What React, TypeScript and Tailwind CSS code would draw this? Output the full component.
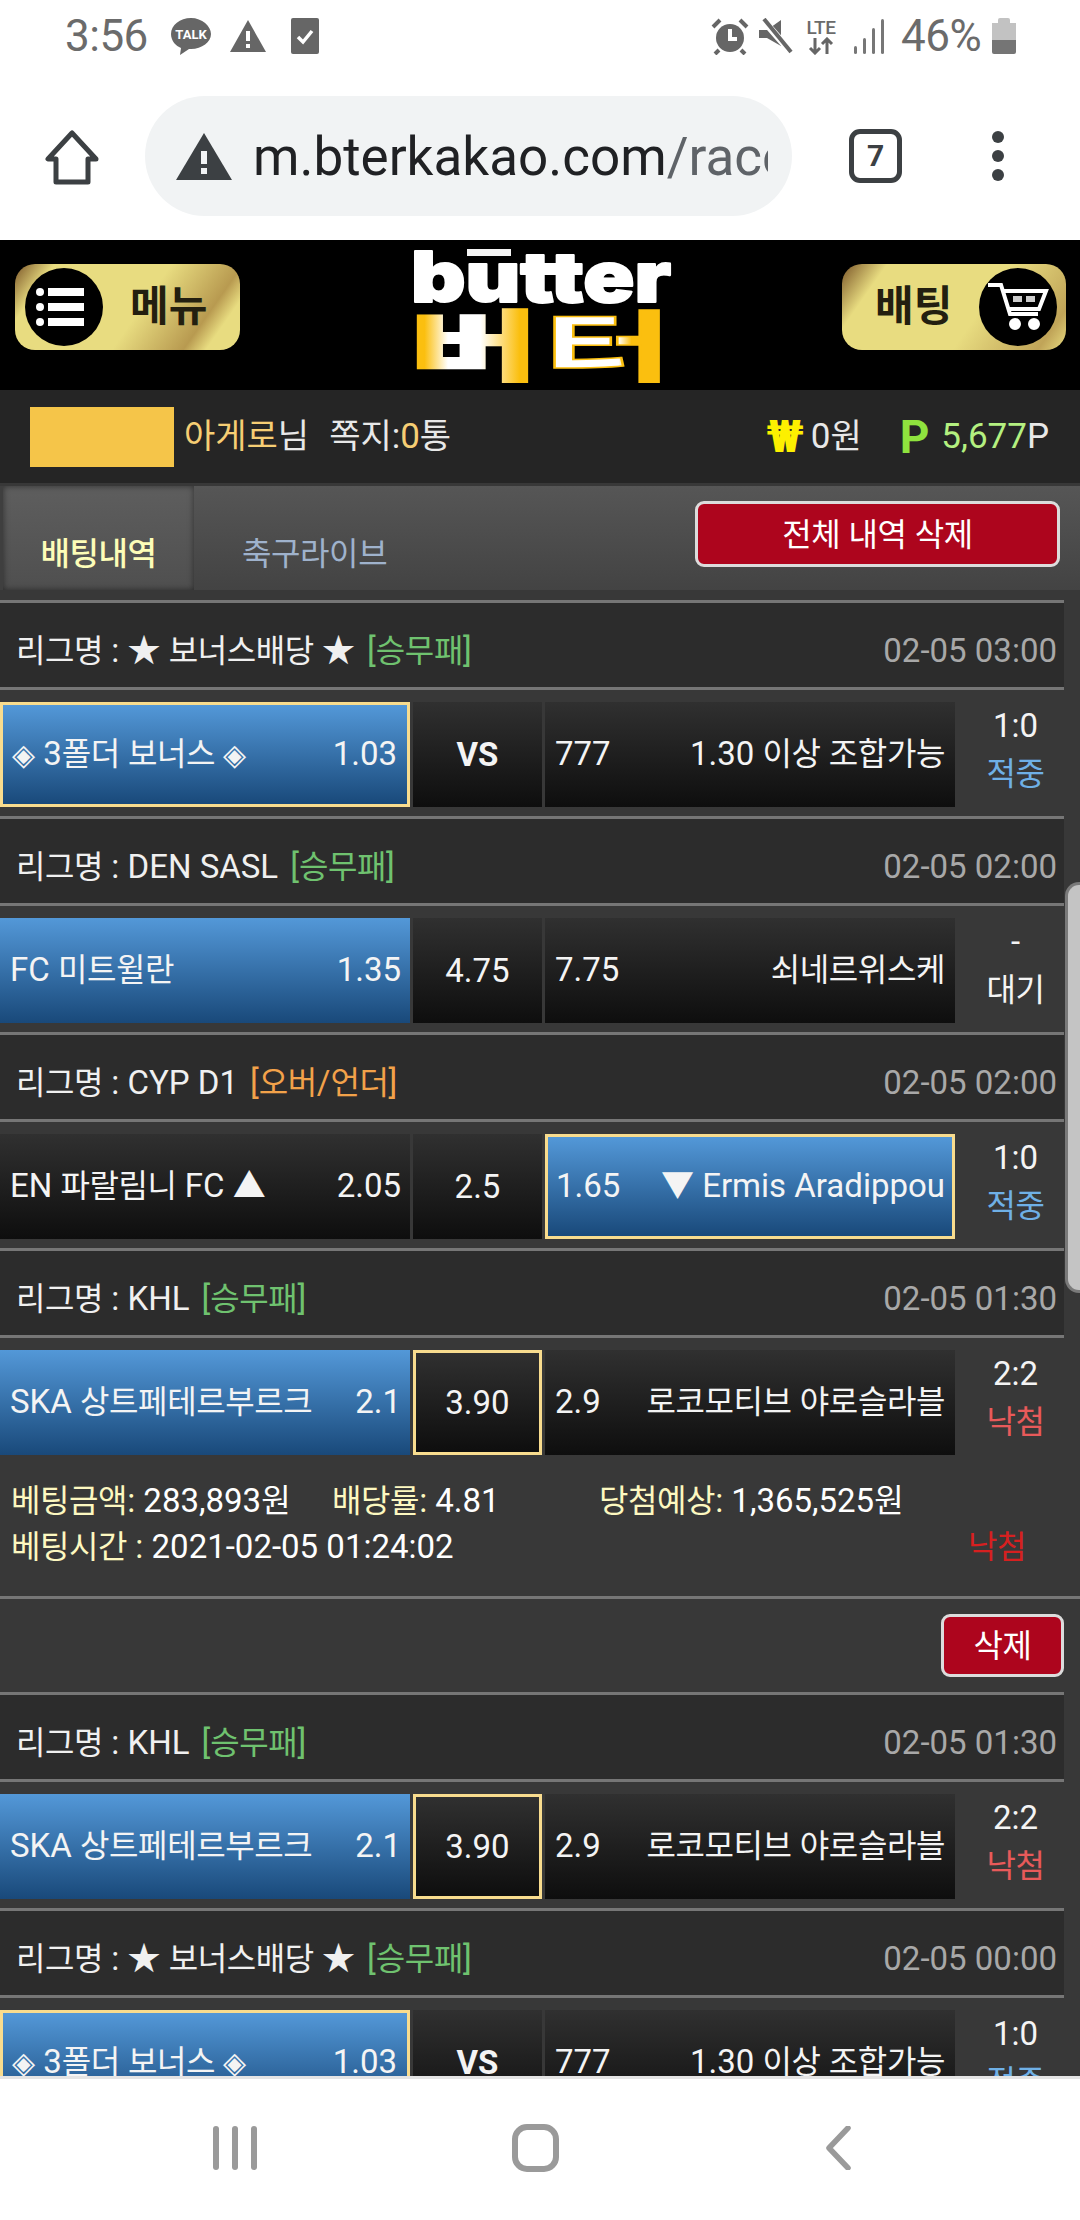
import React from "react";

function T({ children, big }: { children: string; big?: boolean }) {
  const parts = children.split(/([\uAC00-\uD7A3]+|◈)/);
  return (
    <span>
      {parts.map((p, i) =>
        i % 2 === 1 ? (
          p === "◈" ? (
            <span key={i} className="text-[30px]">
              {p}
            </span>
          ) : (
            <span key={i} className={big ? "text-[34px] tracking-[0px]" : "text-[32px] tracking-[-0.4px]"}>
              {p}
            </span>
          )
        ) : (
          <span key={i}>{p}</span>
        )
      )}
    </span>
  );
}

function StatusBar() {
  return (
    <div className="h-[75px] flex items-center justify-between pl-[65px] pr-[64px] pb-[3px] text-[#6b6b6b]">
      <div className="flex items-center">
        <span className="text-[44px] leading-none tracking-[-0.5px] w-[105px]">3:56</span>
        <svg width="42" height="38" viewBox="0 0 42 38">
          <path d="M21 1C10 1 1 8 1 17c0 7 5 12 10 14l-1 7 9-6h2c11 0 20-7 20-15S32 1 21 1z" fill="#666" />
          <text x="21" y="22" textAnchor="middle" fontSize="13" fontWeight="700" fill="#fff" fontFamily="Roboto">TALK</text>
        </svg>
        <svg className="ml-[17px]" width="38" height="34" viewBox="0 0 38 34">
          <path d="M19 1L37 33H1z" fill="#666" />
          <rect x="17" y="12" width="4" height="10" fill="#fff" />
          <rect x="17" y="25" width="4" height="4" fill="#fff" />
        </svg>
        <svg className="ml-[24px]" width="28" height="36" viewBox="0 0 28 36">
          <rect x="0" y="0" width="28" height="36" rx="2" fill="#666" />
          <path d="M7 19l5 5 9-11" fill="none" stroke="#fff" strokeWidth="3.5" />
        </svg>
      </div>
      <div className="flex items-center">
        <svg width="38" height="37" viewBox="0 0 38 37">
          <circle cx="19" cy="20" r="14" fill="#666" />
          <path d="M19 11v10h7" fill="none" stroke="#fff" strokeWidth="4" />
          <path d="M2 9l7-7M36 9l-7-7M8 32l-4 4M30 32l4 4" stroke="#666" strokeWidth="4" />
        </svg>
        <svg className="ml-[10px]" width="34" height="36" viewBox="0 0 34 36">
          <path d="M0 12h8L22 2v26L8 20H0z" fill="#666" />
          <path d="M4 2l28 32" stroke="#fff" strokeWidth="7" />
          <path d="M5 1l27 33" stroke="#666" strokeWidth="4" />
        </svg>
        <div className="ml-[11px] w-[34px] flex flex-col items-center leading-none">
          <span className="text-[19px] font-medium leading-[19px] tracking-[-0.5px]">LTE</span>
          <svg width="26" height="18" viewBox="0 0 26 18">
            <path d="M7 1v15M2 11l5 5 5-5M19 17V2M14 7l5-5 5 5" fill="none" stroke="#666" strokeWidth="3" />
          </svg>
        </div>
        <svg className="ml-[16px]" width="31" height="36" viewBox="0 0 31 36">
          <rect x="0" y="28" width="3" height="8" rx="1.5" fill="#777" />
          <rect x="9" y="20" width="3" height="16" rx="1.5" fill="#777" />
          <rect x="18" y="10" width="3" height="26" rx="1.5" fill="#777" />
          <rect x="27" y="1" width="3" height="35" rx="1.5" fill="#777" />
        </svg>
        <span className="ml-[16px] text-[44px] leading-none tracking-[-0.5px] w-[91px]">46%</span>
        <div className="w-[24px] h-[36px] flex flex-col items-center">
          <div className="w-[12px] h-[5px] bg-[#c2c2c2] rounded-t-[2px]" />
          <div className="w-[24px] h-[17px] bg-[#c2c2c2]" />
          <div className="w-[24px] h-[14px] bg-[#757575] rounded-b-[2px]" />
        </div>
      </div>
    </div>
  );
}

function BrowserBar() {
  return (
    <div className="h-[165px] flex items-start relative">
      <svg className="ml-[45px] mt-[54px]" width="54" height="56" viewBox="0 0 54 56">
        <path d="M27 4L3 30h8v23h32V30h8z" fill="none" stroke="#3c4043" strokeWidth="5" strokeLinejoin="round" />
      </svg>
      <div className="ml-[46px] mt-[21px] w-[647px] h-[120px] rounded-full bg-[#f1f3f4] flex items-center pl-[31px]">
        <svg width="56" height="47" viewBox="0 0 56 47">
          <path d="M28 0L56 47H0z" fill="#3c4043" />
          <rect x="25" y="18" width="6" height="13" fill="#f1f3f4" />
          <rect x="25" y="35" width="6" height="6" fill="#f1f3f4" />
        </svg>
        <div className="ml-[21px] mt-[3px] w-[515px] overflow-hidden whitespace-nowrap text-[53px] leading-none text-[#202124]">
          m.bterkakao.com<span className="text-[#5f6368]">/race/bet_list</span>
        </div>
      </div>
      <div className="ml-[57px] mt-[54px] w-[53px] h-[54px] border-[5px] border-[#3c4043] rounded-[11px] flex items-center justify-center text-[30px] font-bold text-[#3c4043] leading-none">
        7
      </div>
      <div className="ml-[90px] mt-[56px] flex flex-col gap-[7px]">
        <div className="w-[12px] h-[12px] rounded-full bg-[#3c4043]" />
        <div className="w-[12px] h-[12px] rounded-full bg-[#3c4043]" />
        <div className="w-[12px] h-[12px] rounded-full bg-[#3c4043]" />
      </div>
    </div>
  );
}

function Logo() {
  return (
    <svg width="264" height="136" viewBox="0 0 264 136">
      <defs>
        <linearGradient id="bu" x1="0" y1="0" x2="1" y2="0">
          <stop offset="0" stopColor="#fbbf0f" />
          <stop offset="0.12" stopColor="#fbbf0f" />
          <stop offset="0.3" stopColor="#ffffff" />
          <stop offset="0.55" stopColor="#ffffff" />
          <stop offset="0.85" stopColor="#fbbf0f" />
          <stop offset="1" stopColor="#fbbf0f" />
        </linearGradient>
        <linearGradient id="teo" x1="0" y1="0" x2="1" y2="0">
          <stop offset="0" stopColor="#ffffff" />
          <stop offset="0.58" stopColor="#ffffff" />
          <stop offset="0.68" stopColor="#fbbf0f" />
          <stop offset="1" stopColor="#fbbf0f" />
        </linearGradient>
      </defs>
      <text x="2" y="55" fontFamily="Inter" fontWeight="900" fontSize="70" fill="#fff" stroke="#fff" strokeWidth="2" strokeLinejoin="round" textLength="260" lengthAdjust="spacingAndGlyphs">butter</text>
      <rect x="58" y="2" width="44" height="7" fill="#f4f4f4" />
      <text x="0" y="130" fontFamily="Noto Sans CJK KR" fontWeight="900" fontSize="80" fill="url(#bu)" stroke="url(#bu)" strokeWidth="2" textLength="130" lengthAdjust="spacingAndGlyphs">버</text>
      <text x="134" y="130" fontFamily="Noto Sans CJK KR" fontWeight="700" fontSize="80" fill="url(#teo)" stroke="#fbbf0f" strokeWidth="1.5" textLength="130" lengthAdjust="spacingAndGlyphs">터</text>
    </svg>
  );
}

function Header() {
  return (
    <div className="h-[150px] bg-black flex items-center justify-between pl-[15px] pr-[14px]">
      <div className="mb-[16px] w-[225px] h-[86px] rounded-[20px] bg-[linear-gradient(125deg,#7a5528_0%,#e8dc80_14%,#e8dc80_55%,#b89a50_80%,#e8dc80_88%,#e8dc80_100%)] flex items-center pl-[10px]">
        <div className="w-[78px] h-[78px] rounded-full bg-black flex flex-col justify-center gap-[7px] pl-[11px]">
          <div className="flex items-center gap-[4px]"><div className="w-[8px] h-[8px] rounded-full bg-white" /><div className="w-[36px] h-[8px] bg-white" /></div>
          <div className="flex items-center gap-[4px]"><div className="w-[8px] h-[8px] rounded-full bg-white" /><div className="w-[36px] h-[8px] bg-white" /></div>
          <div className="flex items-center gap-[4px]"><div className="w-[8px] h-[8px] rounded-full bg-white" /><div className="w-[36px] h-[8px] bg-white" /></div>
        </div>
        <span className="ml-[27px] text-[42px] font-bold text-[#231f10] leading-none">메뉴</span>
      </div>
      <Logo />
      <div className="mb-[16px] w-[224px] h-[86px] rounded-[20px] bg-[linear-gradient(125deg,#7a5528_0%,#e8dc80_16%,#e8dc80_60%,#c0a458_90%,#e8dc80_100%)] flex items-center pl-[33px]">
        <span className="text-[42px] font-bold text-[#231f10] leading-none">배팅</span>
        <div className="ml-[27px] w-[78px] h-[78px] rounded-full bg-black flex items-center justify-center">
          <svg width="64" height="50" viewBox="0 0 64 50" fill="none" stroke="#fff" strokeWidth="4">
            <path d="M2 3h13l9 29h28" />
            <path d="M17 9h43l-7 18H22" />
            <rect x="27" y="14" width="9" height="6" fill="#ccc" stroke="none" />
            <rect x="40" y="14" width="9" height="6" fill="#ccc" stroke="none" />
            <circle cx="29" cy="42" r="4" fill="#fff" />
            <circle cx="48" cy="42" r="4" fill="#fff" />
          </svg>
        </div>
      </div>
    </div>
  );
}

function UserRow() {
  return (
    <div className="h-[93px] bg-[#252525] flex items-center pl-[30px] pr-[31px] text-[35px] text-[#e8e8e8] leading-none">
      <div className="w-[144px] h-[60px] bg-[#f5c549]" />
      <span className="ml-[10px] text-[#f6ce74]"><T big>아게로</T></span>
      <span><T big>님</T></span>
      <span className="ml-[20px]"><T big>쪽지:</T></span>
      <span className="text-[#f6ce74]">0</span>
      <span><T big>통</T></span>
      <span className="ml-auto text-[#fdf000] font-black text-[44px]">₩</span>
      <span className="ml-[7px]">0<T big>원</T></span>
      <span className="ml-[38px] text-[#8fe33e] font-bold text-[46px]">P</span>
      <span className="ml-[12px] text-[#b4f080]">5,677</span>
      <span>P</span>
    </div>
  );
}

function Tabs() {
  return (
    <div className="mt-[3px] h-[104px] flex bg-[linear-gradient(#565656,#434343)] relative">
      <div className="w-[194px] h-full bg-[linear-gradient(#5e5e5e,#4f4f4f)] border-l-[3px] border-[#3f3f3f] shadow-[inset_0_0_6px_rgba(0,0,0,0.5)] flex items-end justify-center pb-[20px] text-[33px] font-medium text-[#fdfdb8] leading-none">
        <T>배팅내역</T>
      </div>
      <div className="ml-[48px] h-full flex items-end pb-[20px] text-[33px] text-[#9fb2cc] leading-none">
        <T>축구라이브</T>
      </div>
      <div className="ml-auto mr-[20px] mt-[15px] w-[365px] h-[66px] rounded-[9px] border-[3px] border-[#dcdcdc] bg-[#ad051d] flex items-center justify-center text-white text-[33px] leading-none">
        <T>전체 내역 삭제</T>
      </div>
    </div>
  );
}

const divider = "h-[3px] w-[1064px] bg-[#767676]";

function League({ name, tag, orange, date }: { name: string; tag: string; orange?: boolean; date: string }) {
  return (
    <div className="w-[1064px]">
      <div className={divider} />
      <div className="h-[84px] bg-[#2c2c2c] flex items-center justify-between pl-[16px] pr-[7px] pt-[11px] text-[33px] leading-none text-[#f0f0f0]">
        <div className="flex items-center">
          <span><T>{name}</T></span>
          <span className={orange ? "ml-[12px] text-[#f2a24a]" : "ml-[12px] text-[#6fc26f]"}><T>{tag}</T></span>
        </div>
        <span className="text-[#a8a8a8]">{date}</span>
      </div>
      <div className={divider} />
    </div>
  );
}

type Side = "none" | "left" | "mid" | "right";

const blue = "bg-[linear-gradient(#5398d8,#19497a)]";
const dark = "bg-[linear-gradient(#303030,#0e0e0e)]";
const selBorder = "border-[3px] border-[#f8dc8e]";

function Row({ l, lo, m, r, ro, blueSide, sel, score, status, statusColor, boldMid }: {
  l: string; lo: string; m: string; r: string; ro: string;
  blueSide: Side; sel: Side; score: string; status: string; statusColor: string; boldMid?: boolean;
}) {
  return (
    <div className="h-[126px] w-[1064px] pt-[12px] pb-[9px] flex text-[33px] leading-none text-[#f4f4f4]">
      <div className={`w-[410px] flex items-center justify-between pb-[2px] ${blueSide === "left" ? blue : dark} ${sel === "left" ? `${selBorder} pl-[9px] pr-[10px]` : "pl-[10px] pr-[9px]"}`}>
        <span className="whitespace-nowrap"><T>{l}</T></span>
        <span>{lo}</span>
      </div>
      <div className={`ml-[3px] w-[129px] flex items-center justify-center ${dark} ${sel === "mid" ? selBorder : ""} ${boldMid ? "font-bold" : ""}`}>
        {m}
      </div>
      <div className={`ml-[3px] w-[410px] flex items-center justify-between pb-[2px] ${blueSide === "right" ? blue : dark} ${sel === "right" ? `${selBorder} pl-[8px] pr-[7px]` : "pl-[10px] pr-[10px]"}`}>
        <span>{ro}</span>
        <span className="whitespace-nowrap"><T>{r}</T></span>
      </div>
      <div className="flex-1 flex flex-col items-center gap-[15px] pt-[7px] pl-[12px]">
        <span>{score}</span>
        <span className={statusColor}><T>{status}</T></span>
      </div>
    </div>
  );
}

export default function App() {
  return (
    <div className="w-[1080px] h-[2220px] bg-white flex flex-col overflow-hidden font-['Roboto','Noto_Sans_CJK_KR',sans-serif]">
      <StatusBar />
      <BrowserBar />
      <div className="h-[1836px] bg-[#383838] relative overflow-hidden">
        <Header />
        <UserRow />
        <Tabs />
        <div className="h-[10px]" />
        <League name="리그명 : ★ 보너스배당 ★" tag="[승무패]" date="02-05 03:00" />
        <Row l="◈ 3폴더 보너스 ◈" lo="1.03" m="VS" boldMid r="1.30 이상 조합가능" ro="777" blueSide="left" sel="left" score="1:0" status="적중" statusColor="text-[#6fb0e6]" />
        <League name="리그명 : DEN SASL" tag="[승무패]" date="02-05 02:00" />
        <Row l="FC 미트윌란" lo="1.35" m="4.75" r="쇠네르위스케" ro="7.75" blueSide="left" sel="none" score="-" status="대기" statusColor="text-[#f4f4f4]" />
        <League name="리그명 : CYP D1" tag="[오버/언더]" orange date="02-05 02:00" />
        <Row l="EN 파랄림니 FC ▲" lo="2.05" m="2.5" r="▼ Ermis Aradippou" ro="1.65" blueSide="right" sel="right" score="1:0" status="적중" statusColor="text-[#6fb0e6]" />
        <League name="리그명 : KHL" tag="[승무패]" date="02-05 01:30" />
        <Row l="SKA 상트페테르부르크" lo="2.1" m="3.90" r="로코모티브 야로슬라블" ro="2.9" blueSide="left" sel="mid" score="2:2" status="낙첨" statusColor="text-[#e85a5a]" />
        <div className="h-[132px] w-full pt-[14px] text-[33px] leading-[45px] text-white">
          <div className="flex pl-[11px]">
            <span className="w-[321px]"><span className="text-[#fdf8c0]"><T>베팅금액:</T></span> 283,893<T>원</T></span>
            <span className="w-[267px]"><span className="text-[#fdf8c0]"><T>배당률:</T></span> 4.81</span>
            <span><span className="text-[#fdf8c0]"><T>당첨예상:</T></span> 1,365,525<T>원</T></span>
          </div>
          <div className="flex justify-between pl-[11px] pr-[54px]">
            <span><span className="text-[#fdf8c0]"><T>베팅시간 :</T></span> 2021-02-05 01:24:02</span>
            <span className="text-[#d62020]"><T>낙첨</T></span>
          </div>
        </div>
        <div className="h-[3px] w-full bg-[#767676]" />
        <div className="h-[93px] w-[1064px] flex justify-end pt-[15px]">
          <div className="w-[123px] h-[63px] rounded-[9px] border-[3px] border-[#dcdcdc] bg-[#ad051d] flex items-center justify-center text-white text-[33px] leading-none">
            <T>삭제</T>
          </div>
        </div>
        <League name="리그명 : KHL" tag="[승무패]" date="02-05 01:30" />
        <Row l="SKA 상트페테르부르크" lo="2.1" m="3.90" r="로코모티브 야로슬라블" ro="2.9" blueSide="left" sel="mid" score="2:2" status="낙첨" statusColor="text-[#e85a5a]" />
        <League name="리그명 : ★ 보너스배당 ★" tag="[승무패]" date="02-05 00:00" />
        <Row l="◈ 3폴더 보너스 ◈" lo="1.03" m="VS" boldMid r="1.30 이상 조합가능" ro="777" blueSide="left" sel="left" score="1:0" status="적중" statusColor="text-[#6fb0e6]" />
        <div className="absolute right-0 top-[642px] w-[15px] h-[411px] bg-[#c4c4c4] rounded-l-[14px] border-l-[3px] border-t-[3px] border-b-[3px] border-[#7a7a7a]" />
      </div>
      <div className="h-[144px] border-t-[3px] border-[#e4e4e4] bg-white relative flex items-start">
        <div className="ml-[213px] mt-[47px] flex gap-[13px]">
          <div className="w-[6px] h-[44px] rounded-full bg-[#9a9a9a]" />
          <div className="w-[6px] h-[44px] rounded-full bg-[#9a9a9a]" />
          <div className="w-[6px] h-[44px] rounded-full bg-[#9a9a9a]" />
        </div>
        <div className="ml-[255px] mt-[45px] w-[47px] h-[48px] rounded-[15px] border-[6px] border-[#9a9a9a]" />
        <svg className="ml-[264px] mt-[47px]" width="28" height="44" viewBox="0 0 28 44">
          <path d="M25 2L6 22l19 20" fill="none" stroke="#9a9a9a" strokeWidth="5.5" strokeLinecap="round" strokeLinejoin="round" />
        </svg>
      </div>
    </div>
  );
}
